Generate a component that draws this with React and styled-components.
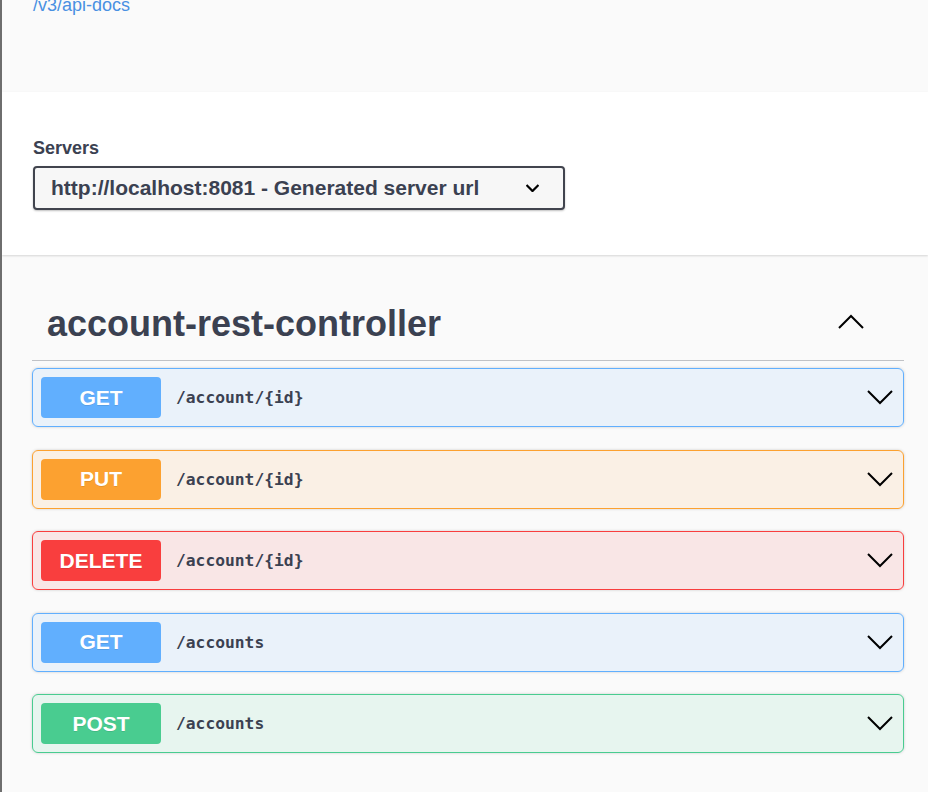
import React from 'react';
import styled, { createGlobalStyle } from 'styled-components';

const GlobalStyle = createGlobalStyle`
  html, body {
    margin: 0;
    padding: 0;
    background: #fafafa;
  }
  body {
    font-family: 'Liberation Sans', Arial, sans-serif;
    color: #3b4151;
  }
`;

const METHODS = {
  GET: { color: '#61affe', bg: 'rgba(97,175,254,.1)' },
  PUT: { color: '#fca130', bg: 'rgba(252,161,48,.1)' },
  DELETE: { color: '#f93e3e', bg: 'rgba(249,62,62,.1)' },
  POST: { color: '#49cc90', bg: 'rgba(73,204,144,.1)' },
};

const Page = styled.div`
  min-height: 792px;
  border-left: 2px solid #6e6e6e;
  box-sizing: border-box;
  overflow: hidden;
`;

const Info = styled.div`
  display: flow-root;
  height: 92px;
  padding: 0 24px 0 31px;
  box-sizing: border-box;
`;

const DocLink = styled.a`
  display: block;
  margin-top: -5px;
  font-size: 18px;
  color: #4990e2;
  text-decoration: none;
`;

const SchemeContainer = styled.div`
  background: #fff;
  box-shadow: 0 1px 2px 0 rgba(0, 0, 0, 0.15);
  padding: 45px 24px 45px 30px;
`;

const ServersTitle = styled.label`
  display: block;
  font-size: 18px;
  font-weight: bold;
  line-height: 22px;
  margin: 0 0 7px 1px;
`;

const Select = styled.div`
  width: 532px;
  height: 44px;
  box-sizing: border-box;
  margin-left: 1px;
  display: flex;
  align-items: center;
  justify-content: space-between;
  padding: 0 24px 0 16px;
  border: 2px solid #41444e;
  border-radius: 4px;
  background: #f7f7f7;
  box-shadow: 0 1px 2px 0 rgba(0, 0, 0, 0.25);
  font-size: 21px;
  font-weight: bold;
  color: #3b4151;
`;

const Section = styled.div`
  padding: 34px 24px 0 30px;
`;

const TagHeading = styled.h3`
  display: flex;
  align-items: center;
  justify-content: space-between;
  margin: 0 0 7px;
  padding: 14px 40px 15px 15px;
  border-bottom: 1px solid rgba(59, 65, 81, 0.3);
  font-size: 36px;
  font-weight: bold;
  line-height: 42px;
  color: #3b4151;
`;

const TagToggle = styled.span`
  display: flex;
  margin-bottom: 5px;
`;

const OpList = styled.div`
  display: flex;
  flex-direction: column;
  gap: 22.5px;
`;

const OpBlock = styled.div`
  display: flex;
  align-items: center;
  height: 59px;
  box-sizing: border-box;
  padding: 0 10px 0 8px;
  border: 1px solid ${(p) => p.$color};
  border-radius: 6px;
  background: ${(p) => p.$bg};
  box-shadow: 0 0 3px rgba(0, 0, 0, 0.19);
`;

const Method = styled.span`
  width: 120px;
  height: 41px;
  display: flex;
  align-items: center;
  justify-content: center;
  border-radius: 4px;
  background: ${(p) => p.$color};
  color: #fff;
  font-size: 21px;
  font-weight: bold;
  text-shadow: 0 1px 0 rgba(0, 0, 0, 0.1);
`;

const Path = styled.span`
  flex: 1;
  margin-left: 15px;
  font-family: 'DejaVu Sans Mono', monospace;
  font-size: 16.3px;
  font-weight: bold;
  color: #3b4151;
`;

const Arrow = ({ up, size = 26, weight = 2 }) => (
  <svg width={size} height={size / 2 + 2} viewBox="0 0 26 15" fill="none">
    <polyline
      points={up ? '1,14 13,2 25,14' : '1,1 13,13 25,1'}
      stroke="#000"
      strokeWidth={weight}
    />
  </svg>
);

const ops = [
  { method: 'GET', path: '/account/{id}' },
  { method: 'PUT', path: '/account/{id}' },
  { method: 'DELETE', path: '/account/{id}' },
  { method: 'GET', path: '/accounts' },
  { method: 'POST', path: '/accounts' },
];

export default function App() {
  return (
    <Page>
      <GlobalStyle />
      <Info>
        <DocLink href="#">/v3/api-docs</DocLink>
      </Info>
      <SchemeContainer>
        <ServersTitle>Servers</ServersTitle>
        <Select>
          <span>http://localhost:8081 - Generated server url</span>
          <Arrow size={13} weight={4.5} />
        </Select>
      </SchemeContainer>
      <Section>
        <TagHeading>
          <span>account-rest-controller</span>
          <TagToggle>
            <Arrow up />
          </TagToggle>
        </TagHeading>
        <OpList>
          {ops.map((op, i) => (
            <OpBlock key={i} $color={METHODS[op.method].color} $bg={METHODS[op.method].bg}>
              <Method $color={METHODS[op.method].color}>{op.method}</Method>
              <Path>{op.path}</Path>
              <Arrow />
            </OpBlock>
          ))}
        </OpList>
      </Section>
    </Page>
  );
}
